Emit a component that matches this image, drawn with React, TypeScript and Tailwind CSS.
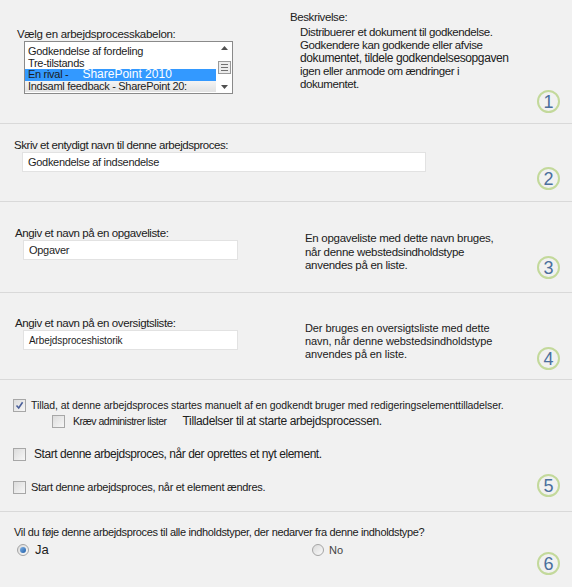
import React from "react";

const font = { fontFamily: '"Liberation Sans", Arial, sans-serif' };

function StepBadge({ n, top }: { n: number; top: string }) {
  return (
    <div
      className={`absolute right-[12px] ${top} flex h-[23px] w-[23px] items-center justify-center rounded-full border-2 border-[#c3d99b] text-[18px] leading-none text-[#4a6f9d]`}
    >
      {n}
    </div>
  );
}

function CheckBox({ checked = false }: { checked?: boolean }) {
  return (
    <span className="flex h-[13px] w-[13px] shrink-0 items-center justify-center border border-[#a7a7a7] bg-gradient-to-br from-[#dcdcdc] to-[#f7f7f7]">
      {checked && (
        <svg width="9" height="9" viewBox="0 0 9 9">
          <path d="M1.5 4.5 L3.7 7 L7.6 1.3" fill="none" stroke="#4a5f9a" strokeWidth="1.6" />
        </svg>
      )}
    </span>
  );
}

function Radio({ checked = false }: { checked?: boolean }) {
  return (
    <span className="flex h-[12px] w-[12px] shrink-0 items-center justify-center rounded-full border border-[#a5a5a5] bg-gradient-to-br from-[#dadada] to-[#fafafa]">
      {checked && <span className="h-[6px] w-[6px] rounded-full bg-gradient-to-br from-[#7fb2e6] to-[#1e5fa8]" />}
    </span>
  );
}

function TextBox({ value, width, small = false }: { value: string; width: string; small?: boolean }) {
  return (
    <div
      className={`${width} ml-[8px] flex h-[20px] items-center border border-[#e2e2e2] bg-white pl-[5px] ${
        small ? "text-[10px] tracking-[-0.1px]" : "text-[11px] tracking-[-0.3px]"
      } text-[#1e1e1e]`}
    >
      {value}
    </div>
  );
}

function TemplateList() {
  return (
    <div className="ml-[7px] flex h-[53px] w-[209px] border border-[#8a8a8a] bg-white text-[11px] leading-[11.5px] tracking-[-0.3px] text-[#1c1c1c]">
      <div className="flex flex-1 flex-col pt-[4px]">
        <div className="pl-[3px]">Godkendelse af fordeling</div>
        <div className="pl-[3px]">Tre-tilstands</div>
        <div className="flex h-[11.5px] bg-[#3399ff] pl-[3px]">
          <span>En rival -</span>
          <span className="ml-[14px] text-[12px] tracking-[0px] text-white">SharePoint 2010</span>
        </div>
        <div className="bg-gradient-to-b from-[#f4f4f4] to-[#e2e2e2] pl-[3px]">Indsaml feedback - SharePoint 20:</div>
      </div>
      <div className="flex w-[16px] flex-col items-center justify-between py-[4px]">
        <svg width="7" height="4" viewBox="0 0 7 4">
          <path d="M0 4 L3.5 0 L7 4 Z" fill="#505050" />
        </svg>
        <div className="flex h-[13px] w-[13px] flex-col items-center justify-center gap-[2px] border border-[#9a9a9a] bg-[#ececec]">
          <span className="h-px w-[7px] bg-[#707070]" />
          <span className="h-px w-[7px] bg-[#707070]" />
          <span className="h-px w-[7px] bg-[#707070]" />
        </div>
        <svg width="7" height="4" viewBox="0 0 7 4">
          <path d="M0 0 L3.5 4 L7 0 Z" fill="#505050" />
        </svg>
      </div>
    </div>
  );
}

export default function App() {
  return (
    <div className="h-[587px] w-[572px] overflow-hidden bg-[#f1f1f1] text-[#202020]" style={font}>
      {/* template picker + description */}
      <section className="relative flex h-[124px] border-b border-[#d9d9d9]">
        <div className="w-[290px] pl-[17px] pt-[28px]">
          <div className="text-[11.5px] leading-[13px] tracking-[-0.3px]">Vælg en arbejdsprocesskabelon:</div>
          <TemplateList />
        </div>
        <div className="pt-[11px] text-[11.5px] leading-[13px] tracking-[-0.4px]">
          <div>Beskrivelse:</div>
          <div className="mt-[2px] pl-[10px]">
            Distribuerer et dokument til godkendelse.
            <br />
            Godkendere kan godkende eller afvise
            <br />
            <span className="text-[12px]">dokumentet, tildele godkendelsesopgaven</span>
            <br />
            igen eller anmode om ændringer i
            <br />
            dokumentet.
          </div>
        </div>
        <StepBadge n={1} top="top-[90px]" />
      </section>

      {/* workflow name */}
      <section className="relative h-[78px] border-b border-[#d9d9d9] pl-[14px] pt-[15px]">
        <div className="text-[11.5px] leading-[13px] tracking-[-0.45px]">Skriv et entydigt navn til denne arbejdsproces:</div>
        <TextBox value="Godkendelse af indsendelse" width="w-[404px]" />
        <StepBadge n={2} top="top-[43px]" />
      </section>

      {/* task list */}
      <section className="relative flex h-[91px] border-b border-[#d9d9d9] pt-[25px]">
        <div className="w-[305px] pl-[15px]">
          <div className="text-[11.5px] leading-[13px] tracking-[-0.4px]">Angiv et navn på en opgaveliste:</div>
          <TextBox value="Opgaver" width="w-[215px]" />
        </div>
        <div className="pt-[5px] text-[11.5px] leading-[13.5px] tracking-[-0.3px]">
          <div>En opgaveliste med dette navn bruges,</div>
          <div>når denne webstedsindholdstype</div>
          <div>anvendes på en liste.</div>
        </div>
        <StepBadge n={3} top="top-[54px]" />
      </section>

      {/* history list */}
      <section className="relative flex h-[87px] border-b border-[#d9d9d9] pt-[24px]">
        <div className="w-[305px] pl-[15px]">
          <div className="text-[11.5px] leading-[13px] tracking-[-0.4px]">Angiv et navn på en oversigtsliste:</div>
          <TextBox value="Arbejdsproceshistorik" width="w-[215px]" small />
        </div>
        <div className="pt-[5px] text-[11px] leading-[13px] tracking-[-0.1px]">
          <div>Der bruges en oversigtsliste med dette</div>
          <div>navn, når denne webstedsindholdstype</div>
          <div>anvendes på en liste.</div>
        </div>
        <StepBadge n={4} top="top-[54px]" />
      </section>

      {/* start options */}
      <section className="relative h-[132px] border-b border-[#d9d9d9] pl-[13px] pt-[19px] leading-[13px]">
        <div className="flex h-[13px] items-center gap-[5px] text-[10.5px] tracking-[-0.1px]">
          <CheckBox checked />
          <span>Tillad, at denne arbejdsproces startes manuelt af en godkendt bruger med redigeringselementtilladelser.</span>
        </div>
        <div className="mt-[3px] flex h-[13px] items-center pl-[39px]">
          <CheckBox />
          <span className="ml-[8px] text-[10.5px] tracking-[-0.5px]">Kræv administrer lister</span>
          <span className="ml-[16px] text-[12px] tracking-[-0.35px]">Tilladelser til at starte arbejdsprocessen.</span>
        </div>
        <div className="mt-[20px] flex h-[13px] items-center gap-[8px] text-[12px] tracking-[-0.45px]">
          <CheckBox />
          <span>Start denne arbejdsproces, når der oprettes et nyt element.</span>
        </div>
        <div className="mt-[20px] flex h-[13px] items-center gap-[5px] text-[11px] tracking-[-0.3px]">
          <CheckBox />
          <span>Start denne arbejdsproces, når et element ændres.</span>
        </div>
        <StepBadge n={5} top="top-[94px]" />
      </section>

      {/* inheritance */}
      <section className="relative h-[75px] pl-[14px] pt-[14px]">
        <div className="text-[11px] leading-[13px] tracking-[-0.35px]">
          Vil du føje denne arbejdsproces til alle indholdstyper, der nedarver fra denne indholdstype?
        </div>
        <div className="mt-[4px] flex h-[14px] items-center">
          <div className="flex w-[298px] items-center gap-[6px] pl-[3px]">
            <Radio checked />
            <span className="text-[13px]">Ja</span>
          </div>
          <div className="flex items-center gap-[5px] text-[11px] text-[#444]">
            <Radio />
            <span>No</span>
          </div>
        </div>
        <StepBadge n={6} top="top-[40px]" />
      </section>
    </div>
  );
}
